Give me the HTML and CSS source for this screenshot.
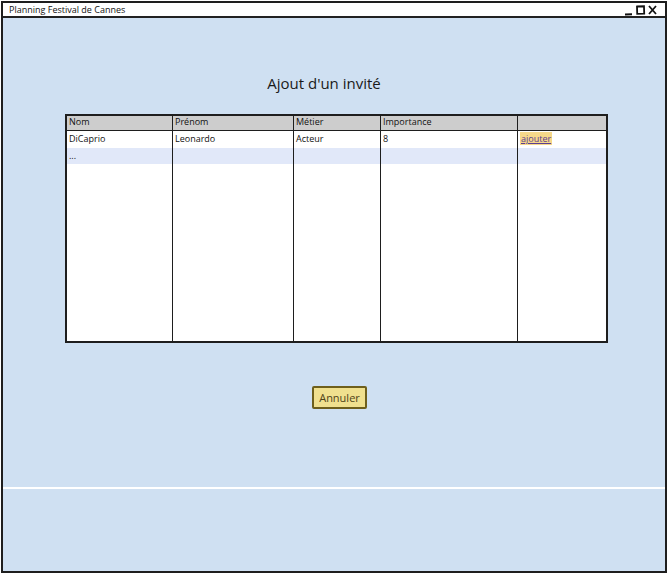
FILE: index.html
```html
<!DOCTYPE html>
<html>
<head>
<meta charset="utf-8">
<link rel="stylesheet" href="styles.css">
</head>
<body>
<div class="window">
  <div class="titlebar">
    <span class="title">Planning Festival de Cannes</span>
    <div class="controls">
      <svg width="40" height="12" viewBox="0 0 40 12">
        <path d="M2 10.5 L9 10.3" stroke="#111" stroke-width="2" fill="none"/>
        <path d="M14 2.5 L21 2.3 L21.2 9.6 L14.2 9.8 Z" stroke="#111" stroke-width="1.8" fill="none"/>
        <path d="M26 2 L33 10 M33 2 L26 10" stroke="#111" stroke-width="1.8" fill="none"/>
      </svg>
    </div>
  </div>
  <div class="main">
    <h1 class="heading">Ajout d'un invité</h1>
    <div class="grid">
      <div class="cell head">Nom</div>
      <div class="cell head">Prénom</div>
      <div class="cell head">Métier</div>
      <div class="cell head">Importance</div>
      <div class="cell head last"></div>

      <div class="cell">DiCaprio</div>
      <div class="cell">Leonardo</div>
      <div class="cell">Acteur</div>
      <div class="cell">8</div>
      <div class="cell last"><a class="link">ajouter</a></div>

      <div class="cell alt">...</div>
      <div class="cell alt"></div>
      <div class="cell alt"></div>
      <div class="cell alt"></div>
      <div class="cell alt last"></div>

      <div class="cell fill"></div>
      <div class="cell fill"></div>
      <div class="cell fill"></div>
      <div class="cell fill"></div>
      <div class="cell fill last"></div>
    </div>
    <div class="actions">
      <button class="btn">Annuler</button>
    </div>
  </div>
  <div class="footer"></div>
</div>
</body>
</html>
```

FILE: styles.css
```css
* { box-sizing: border-box; }
html, body { margin: 0; padding: 0; background: #ffffff; }
body { font-family: "Open Sans", "Noto Sans", sans-serif; }

.window {
  margin: 1px;
  width: 666px;
  height: 572px;
  border: 2px solid #1e1e1e;
  background: #cfe0f2;
  display: flex;
  flex-direction: column;
}

.titlebar {
  height: 15px;
  background: #ffffff;
  border-bottom: 2px solid #222;
  display: flex;
  align-items: center;
  justify-content: space-between;
  padding: 0 2px 0 6px;
}
.title {
  font-size: 9px;
  color: #111;
  line-height: 13px;
}
.controls { display: flex; align-items: center; height: 13px; }
.controls svg { display: block; }

.main {
  height: 471px;
  border-bottom: 2px solid #ffffff;
  display: flex;
  flex-direction: column;
  padding-left: 62px;
}
.heading {
  margin: 55px 0 0 0;
  width: 542px;
  padding-right: 24px;
  text-align: center;
  font-weight: normal;
  font-size: 15px;
  line-height: 20px;
  color: #1a1a1a;
}

.grid {
  margin-top: 21px;
  width: 543px;
  height: 229px;
  display: grid;
  grid-template-columns: 106px 121px 87px 137px 1fr;
  grid-template-rows: 15px 17px 16px 1fr;
  border: 2px solid #1e1e1e;
  background: #ffffff;
}
.cell {
  border-right: 1.5px solid #1e1e1e;
  font-size: 9px;
  color: #111;
  padding: 0 2px;
  line-height: 15px;
  white-space: nowrap;
}
.cell.last { border-right: none; }
.head {
  background: #cdcdcd;
  border-bottom: 1.5px solid #1e1e1e;
  line-height: 12px;
}
.alt { background: #e1e8f9; }
.link {
  background: #f6d88a;
  color: #5b3e92;
  text-decoration: underline;
  padding: 0 1px;
}

.actions {
  margin-top: 43px;
  padding-left: 247px;
  display: flex;
}
.btn {
  width: 55px;
  height: 23px;
  background: #f0e08e;
  border: 2px solid #6e5f1c;
  border-radius: 2px;
  font-family: "Open Sans", "Noto Sans", sans-serif;
  font-size: 11px;
  color: #4f4418;
  padding: 0;
}

.footer { flex: 1; }
```
